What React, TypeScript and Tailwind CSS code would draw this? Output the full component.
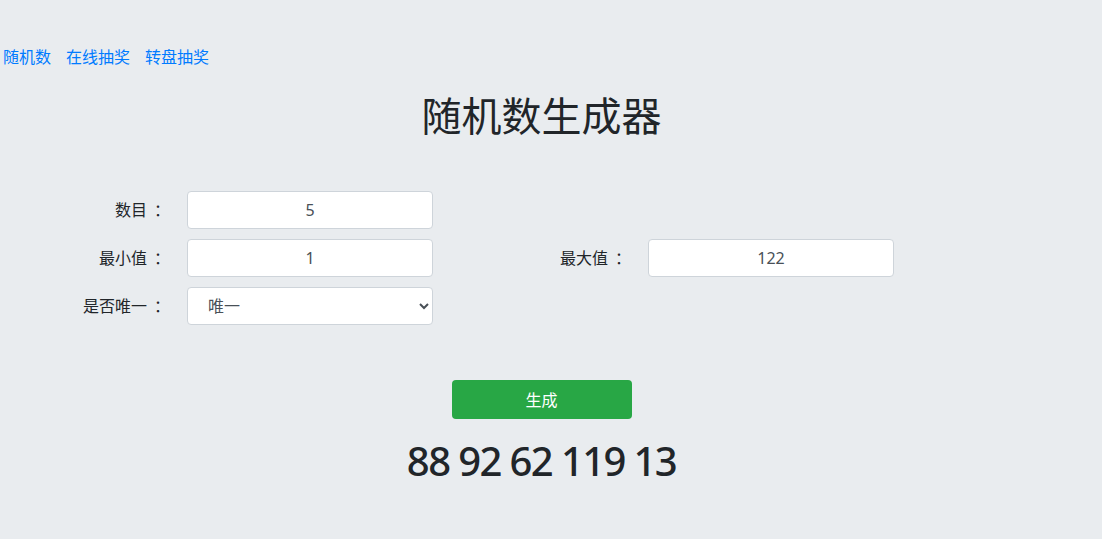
import React from "react";

const font = { fontFamily: '"Noto Sans", "Noto Sans CJK SC", sans-serif' };

function Field({ label, children }: { label: string; children: React.ReactNode }) {
  return (
    <div className="flex w-[461px] items-center">
      <label className="w-[163px] text-right text-[16px] leading-[24px] text-[#212529]">
        {label}
        <span className="inline-block w-[16px] whitespace-nowrap pl-[7px] text-left">：</span>
      </label>
      <div className="ml-[24px] w-[246px]">{children}</div>
    </div>
  );
}

function TextInput({ value }: { value: string }) {
  return (
    <input
      defaultValue={value}
      className="block h-[38px] w-[246px] rounded-[4px] border border-[#ced4da] bg-white px-3 text-center text-[16px] text-[#495057] outline-none"
      style={font}
    />
  );
}

export default function App() {
  return (
    <div className="min-h-[539px] w-full bg-[#e9ecef]" style={font}>
      <div className="w-[1083px]">
        <nav className="flex gap-[15px] pl-[3px] pt-[45px] text-[16px] leading-[24px] text-[#007bff]">
          <a href="#">随机数</a>
          <a href="#">在线抽奖</a>
          <a href="#">转盘抽奖</a>
        </nav>
        <h1 className="mt-[20px] text-center text-[40px] font-normal leading-[54px] text-[#212529]">随机数生成器</h1>
        <div className="mt-[48px] flex flex-col gap-[10px]">
          <div className="flex">
            <Field label="数目">
              <TextInput value="5" />
            </Field>
          </div>
          <div className="flex">
            <Field label="最小值">
              <TextInput value="1" />
            </Field>
            <Field label="最大值">
              <TextInput value="122" />
            </Field>
          </div>
          <div className="flex">
            <Field label="是否唯一">
              <select
                defaultValue="唯一"
                className="block h-[38px] w-[246px] rounded-[4px] border border-[#ced4da] bg-white pl-[16px] pr-1 text-[16px] text-[#495057] outline-none"
                style={font}
              >
                <option>唯一</option>
                <option>不唯一</option>
              </select>
            </Field>
          </div>
        </div>
        <div className="mt-[55px] flex justify-center">
          <button className="h-[39px] w-[180px] rounded-[4px] bg-[#28a745] text-[16px] text-white">生成</button>
        </div>
        <div className="mt-[14px] text-center text-[40px] font-medium leading-[56px] tracking-[-1.6px] text-[#212529]">88 92 62 119 13</div>
      </div>
    </div>
  );
}
